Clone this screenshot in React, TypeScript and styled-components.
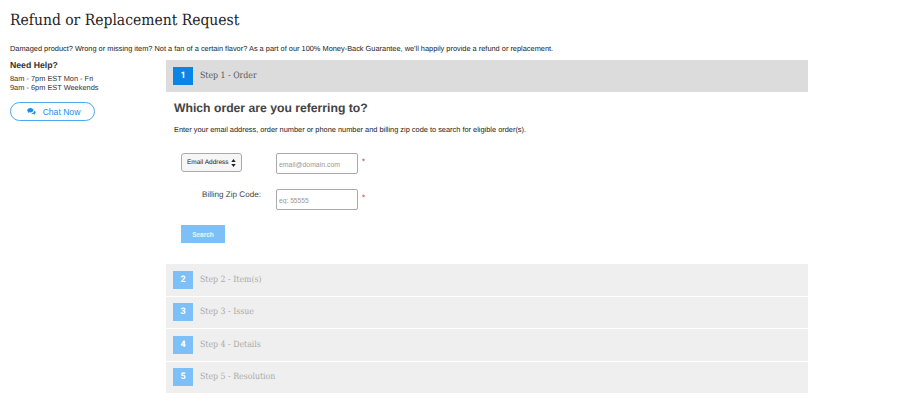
import React from "react";
import styled, {createGlobalStyle} from "styled-components";

const GlobalStyle = createGlobalStyle`
  body {
    margin: 0;
    background: #fff;
    font-family: "Liberation Sans", Arial, sans-serif;
    color: #222;
    text-rendering: geometricPrecision;
  }
`;

const steps = [
    {num: 2, label: "Step 2 - Item(s)"},
    {num: 3, label: "Step 3 - Issue"},
    {num: 4, label: "Step 4 - Details"},
    {num: 5, label: "Step 5 - Resolution"},
];

const App = () => {
    return (
        <Page>
            <GlobalStyle/>
            <Title>Refund or Replacement Request</Title>
            <Intro>
                Damaged product? Wrong or missing item? Not a fan of a certain flavor? As a part of our 100% Money-Back Guarantee, we'll happily provide a refund or replacement.
            </Intro>
            <Columns>
                <Sidebar>
                    <HelpTitle>Need Help?</HelpTitle>
                    <Hours>8am - 7pm EST Mon - Fri<br/>9am - 6pm EST Weekends</Hours>
                    <ChatButton>
                        <svg width="9" height="7" viewBox="0 0 22 18" fill="#1b8fe8">
                            <path d="M8 0C3.6 0 0 2.6 0 5.800c0 1.700 1 3.200 2.600 4.300-.3 1-.9 1.800-1.600 2.500 1.500-.1 3-.7 4.100-1.600.9.200 1.900.4 2.900.4 4.400 0 8-2.600 8-5.700S12.400 0 8 0z"/>
                            <path d="M18 7.500c0 3.700-3.500 6.300-7.800 6.700 1.200 1 3 1.600 4.800 1.600.7 0 1.400-.1 2-.2 1 .9 2.500 1.500 4 1.600-.7-.6-1.300-1.500-1.500-2.400 1.500-.9 2.500-2.300 2.500-3.800 0-1.800-1.500-3.400-3.700-4.200-.2.200-.3.500-.3.700z"/>
                        </svg>
                        Chat Now
                    </ChatButton>
                </Sidebar>
                <Main>
                    <StepHeader $active>
                        <StepNumber $active>1</StepNumber>
                        <StepLabel $active>Step 1 - Order</StepLabel>
                    </StepHeader>
                    <StepBody>
                        <Heading>Which order are you referring to?</Heading>
                        <Instructions>
                            Enter your email address, order number or phone number and billing zip code to search for eligible order(s).
                        </Instructions>
                        <FormGrid>
                            <SelectBox>
                                Email Address
                                <svg width="5" height="8" viewBox="0 0 5 9" fill="#222">
                                    <path d="M2.500 0 5 3.500H0zM2.500 9 0 5.500h5z"/>
                                </svg>
                            </SelectBox>
                            <InputCell>
                                <FakeInput $size={6.9} placeholder="email@domain.com"/>
                                <Required>*</Required>
                            </InputCell>
                            <ZipLabel>Billing Zip Code:</ZipLabel>
                            <InputCell>
                                <FakeInput $size={6.7} placeholder="eg: 55555"/>
                                <Required>*</Required>
                            </InputCell>
                        </FormGrid>
                        <SearchButton>Search</SearchButton>
                    </StepBody>
                    <StepList>
                        {steps.map((step) => (
                            <StepHeader key={step.num}>
                                <StepNumber>{step.num}</StepNumber>
                                <StepLabel>{step.label}</StepLabel>
                            </StepHeader>
                        ))}
                    </StepList>
                </Main>
            </Columns>
        </Page>
    );
};

export default App;

const Page = styled.div`
  padding: 10px 0 0 10px;
  width: 890px;
`;

const Title = styled.h1`
  margin: 0;
  font-family: "DejaVu Serif", serif;
  font-stretch: condensed;
  font-weight: 400;
  font-size: 15.500px;
  line-height: 21px;
  color: #222;
`;

const Intro = styled.p`
  margin: 12px 0 0;
  font-size: 7.400px;
  line-height: 11px;
  color: #222;
`;

const Columns = styled.div`
  display: flex;
  margin-top: 6px;
`;

const Sidebar = styled.aside`
  width: 156px;
  flex: none;
`;

const HelpTitle = styled.div`
  font-size: 8.700px;
  font-weight: 700;
  line-height: 11px;
  color: #333;
`;

const Hours = styled.div`
  margin-top: 3px;
  font-size: 7.400px;
  line-height: 9px;
  color: #333;
`;

const ChatButton = styled.button`
  display: flex;
  align-items: center;
  justify-content: center;
  gap: 7px;
  box-sizing: border-box;
  width: 85px;
  height: 19px;
  margin-top: 10px;
  padding: 0 0 0 2px;
  background: #fff;
  border: 1px solid #4aa8f0;
  border-radius: 10px;
  color: #1b8fe8;
  font-family: inherit;
  font-size: 8.600px;
`;

const Main = styled.main`
  width: 642px;
  flex: none;
`;

const StepHeader = styled.div<{$active?: boolean}>`
  display: flex;
  align-items: center;
  gap: 7px;
  height: ${(p) => (p.$active ? "32px" : "31.500px")};
  padding-left: 7px;
  background: ${(p) => (p.$active ? "#dcdcdc" : "#efefef")};
`;

const StepNumber = styled.span<{$active?: boolean}>`
  display: flex;
  align-items: center;
  justify-content: center;
  width: 20px;
  height: 18px;
  background: ${(p) => (p.$active ? "#0a85e6" : "#7cc0f7")};
  color: #fff;
  font-family: Roboto, sans-serif;
  font-weight: 700;
  font-size: 9px;
`;

const StepLabel = styled.span<{$active?: boolean}>`
  font-family: "DejaVu Serif", serif;
  font-stretch: condensed;
  font-size: 8.700px;
  color: ${(p) => (p.$active ? "#555" : "#aaa")};
`;

const StepBody = styled.section`
  height: 172px;
  box-sizing: border-box;
  padding: 8px 0 0 8px;
`;

const Heading = styled.h2`
  margin: 0;
  font-size: 12.200px;
  line-height: 16px;
  font-weight: 700;
  color: #444;
`;

const Instructions = styled.p`
  margin: 9px 0 0;
  font-size: 7.400px;
  line-height: 10px;
  color: #222;
`;

const FormGrid = styled.div`
  display: grid;
  grid-template-columns: 95px auto;
  row-gap: 15px;
  margin: 18px 0 0 7px;
`;

const SelectBox = styled.div`
  display: flex;
  align-items: center;
  justify-content: space-between;
  box-sizing: border-box;
  width: 61px;
  height: 19px;
  padding: 0 5px;
  background: #f6f6f6;
  border: 1px solid #aaa;
  border-radius: 3px;
  font-size: 6.500px;
  white-space: nowrap;
  color: #222;
`;

const InputCell = styled.div`
  display: flex;
  align-items: flex-start;
  gap: 4px;
`;

const FakeInput = styled.input<{$size: number}>`
  box-sizing: border-box;
  width: 82px;
  height: 21px;
  padding: 2px 2px 0;
  background: #fff;
  border: 1px solid #aaa;
  border-radius: 2px;
  font-family: inherit;
  font-size: ${(p) => p.$size}px;
  outline: none;

  &::placeholder {
    color: #999;
    opacity: 1;
  }
`;

const Required = styled.span`
  color: #c22;
  font-size: 8px;
  line-height: 17px;
`;

const ZipLabel = styled.div`
  padding: 1px 0 0 21px;
  font-size: 8.100px;
  line-height: 10px;
  color: #444;
`;

const SearchButton = styled.button`
  display: block;
  width: 44px;
  height: 18px;
  margin: 15px 0 0 7px;
  padding: 0;
  background: #7cc0f7;
  border: none;
  color: #e8f4fe;
  font-family: inherit;
  font-weight: 700;
  font-size: 6.500px;
`;

const StepList = styled.div`
  display: flex;
  flex-direction: column;
  gap: 1px;
`;
